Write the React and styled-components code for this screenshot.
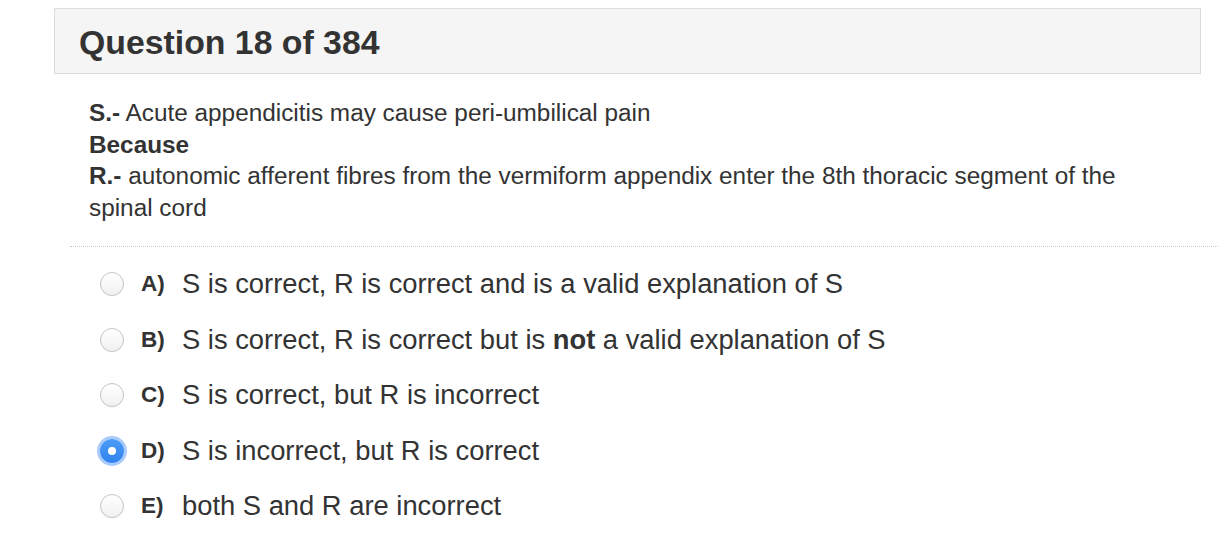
import React from "react";
import styled, { createGlobalStyle } from "styled-components";

const Global = createGlobalStyle`
  html, body { margin: 0; padding: 0; background: #fff; }
  body { font-family: "Liberation Sans", Arial, Helvetica, sans-serif; color: #333; overflow: hidden; }
`;

const Page = styled.div`
  width: 1218px;
  height: 538px;
  padding: 8px 0 0 54px;
  box-sizing: border-box;
  overflow: hidden;
`;

const Header = styled.div`
  width: 1147px;
  height: 66px;
  box-sizing: border-box;
  background: #f5f5f5;
  border: 1px solid #dcdcdc;
  display: flex;
  align-items: center;
  padding-left: 24px;
`;

const Title = styled.h1`
  margin: 0;
  font-size: 33.8px;
  font-weight: 700;
  color: #333;
  line-height: 1;
  padding-top: 3px;
`;

const Stem = styled.div`
  margin: 23px 0 0 35px;
  width: 1060px;
  font-size: 24.35px;
  line-height: 31.6px;
  color: #333;
`;

const Strong = styled.b`
  font-weight: 700;
`;

const Separator = styled.hr`
  margin: 23px 0 0 16px;
  width: 1200px;
  border: 0;
  border-top: 1px dotted #c9c9c9;
  height: 0;
`;

const Options = styled.div`
  margin-top: 9px;
  padding-left: 46px;
  display: flex;
  flex-direction: column;
`;

const Row = styled.label`
  display: flex;
  align-items: center;
  height: 55.5px;
`;

const Radio = styled.span`
  width: 24px;
  height: 24px;
  box-sizing: border-box;
  border-radius: 50%;
  flex: none;
  display: flex;
  align-items: center;
  justify-content: center;
  border: ${(p) => (p.$checked ? "none" : "1px solid #c4c4c4")};
  background: ${(p) =>
    p.$checked
      ? "linear-gradient(#4b9bf8, #2f83ee)"
      : "linear-gradient(#ffffff, #f1f1f1)"};
  box-shadow: ${(p) =>
    p.$checked ? "0 0 0 3px rgba(96, 160, 246, 0.55)" : "0 0.5px 1px rgba(0,0,0,0.06)"};
  &::after {
    content: "";
    display: ${(p) => (p.$checked ? "block" : "none")};
    width: 8px;
    height: 8px;
    border-radius: 50%;
    background: #fff;
  }
`;

const Letter = styled.span`
  margin-left: 17px;
  width: 41px;
  font-size: 22.5px;
  font-weight: 700;
  color: #333;
`;

const Text = styled.span`
  font-size: 27.35px;
  color: #333;
`;

const options = [
  { l: "A)", t: <>S is correct, R is correct and is a valid explanation of S</> },
  { l: "B)", t: <>S is correct, R is correct but is <Strong>not</Strong> a valid explanation of S</> },
  { l: "C)", t: <>S is correct, but R is incorrect</> },
  { l: "D)", t: <>S is incorrect, but R is correct</>, checked: true },
  { l: "E)", t: <>both S and R are incorrect</> },
];

export default function App() {
  return (
    <Page>
      <Global />
      <Header>
        <Title>Question 18 of 384</Title>
      </Header>
      <Stem>
        <Strong>S.-</Strong> Acute appendicitis may cause peri-umbilical pain
        <br />
        <Strong>Because</Strong>
        <br />
        <Strong>R.-</Strong> autonomic afferent fibres from the vermiform appendix enter the 8th thoracic segment of the spinal cord
      </Stem>
      <Separator />
      <Options>
        {options.map((o) => (
          <Row key={o.l}>
            <Radio $checked={o.checked} />
            <Letter>{o.l}</Letter>
            <Text>{o.t}</Text>
          </Row>
        ))}
      </Options>
    </Page>
  );
}
